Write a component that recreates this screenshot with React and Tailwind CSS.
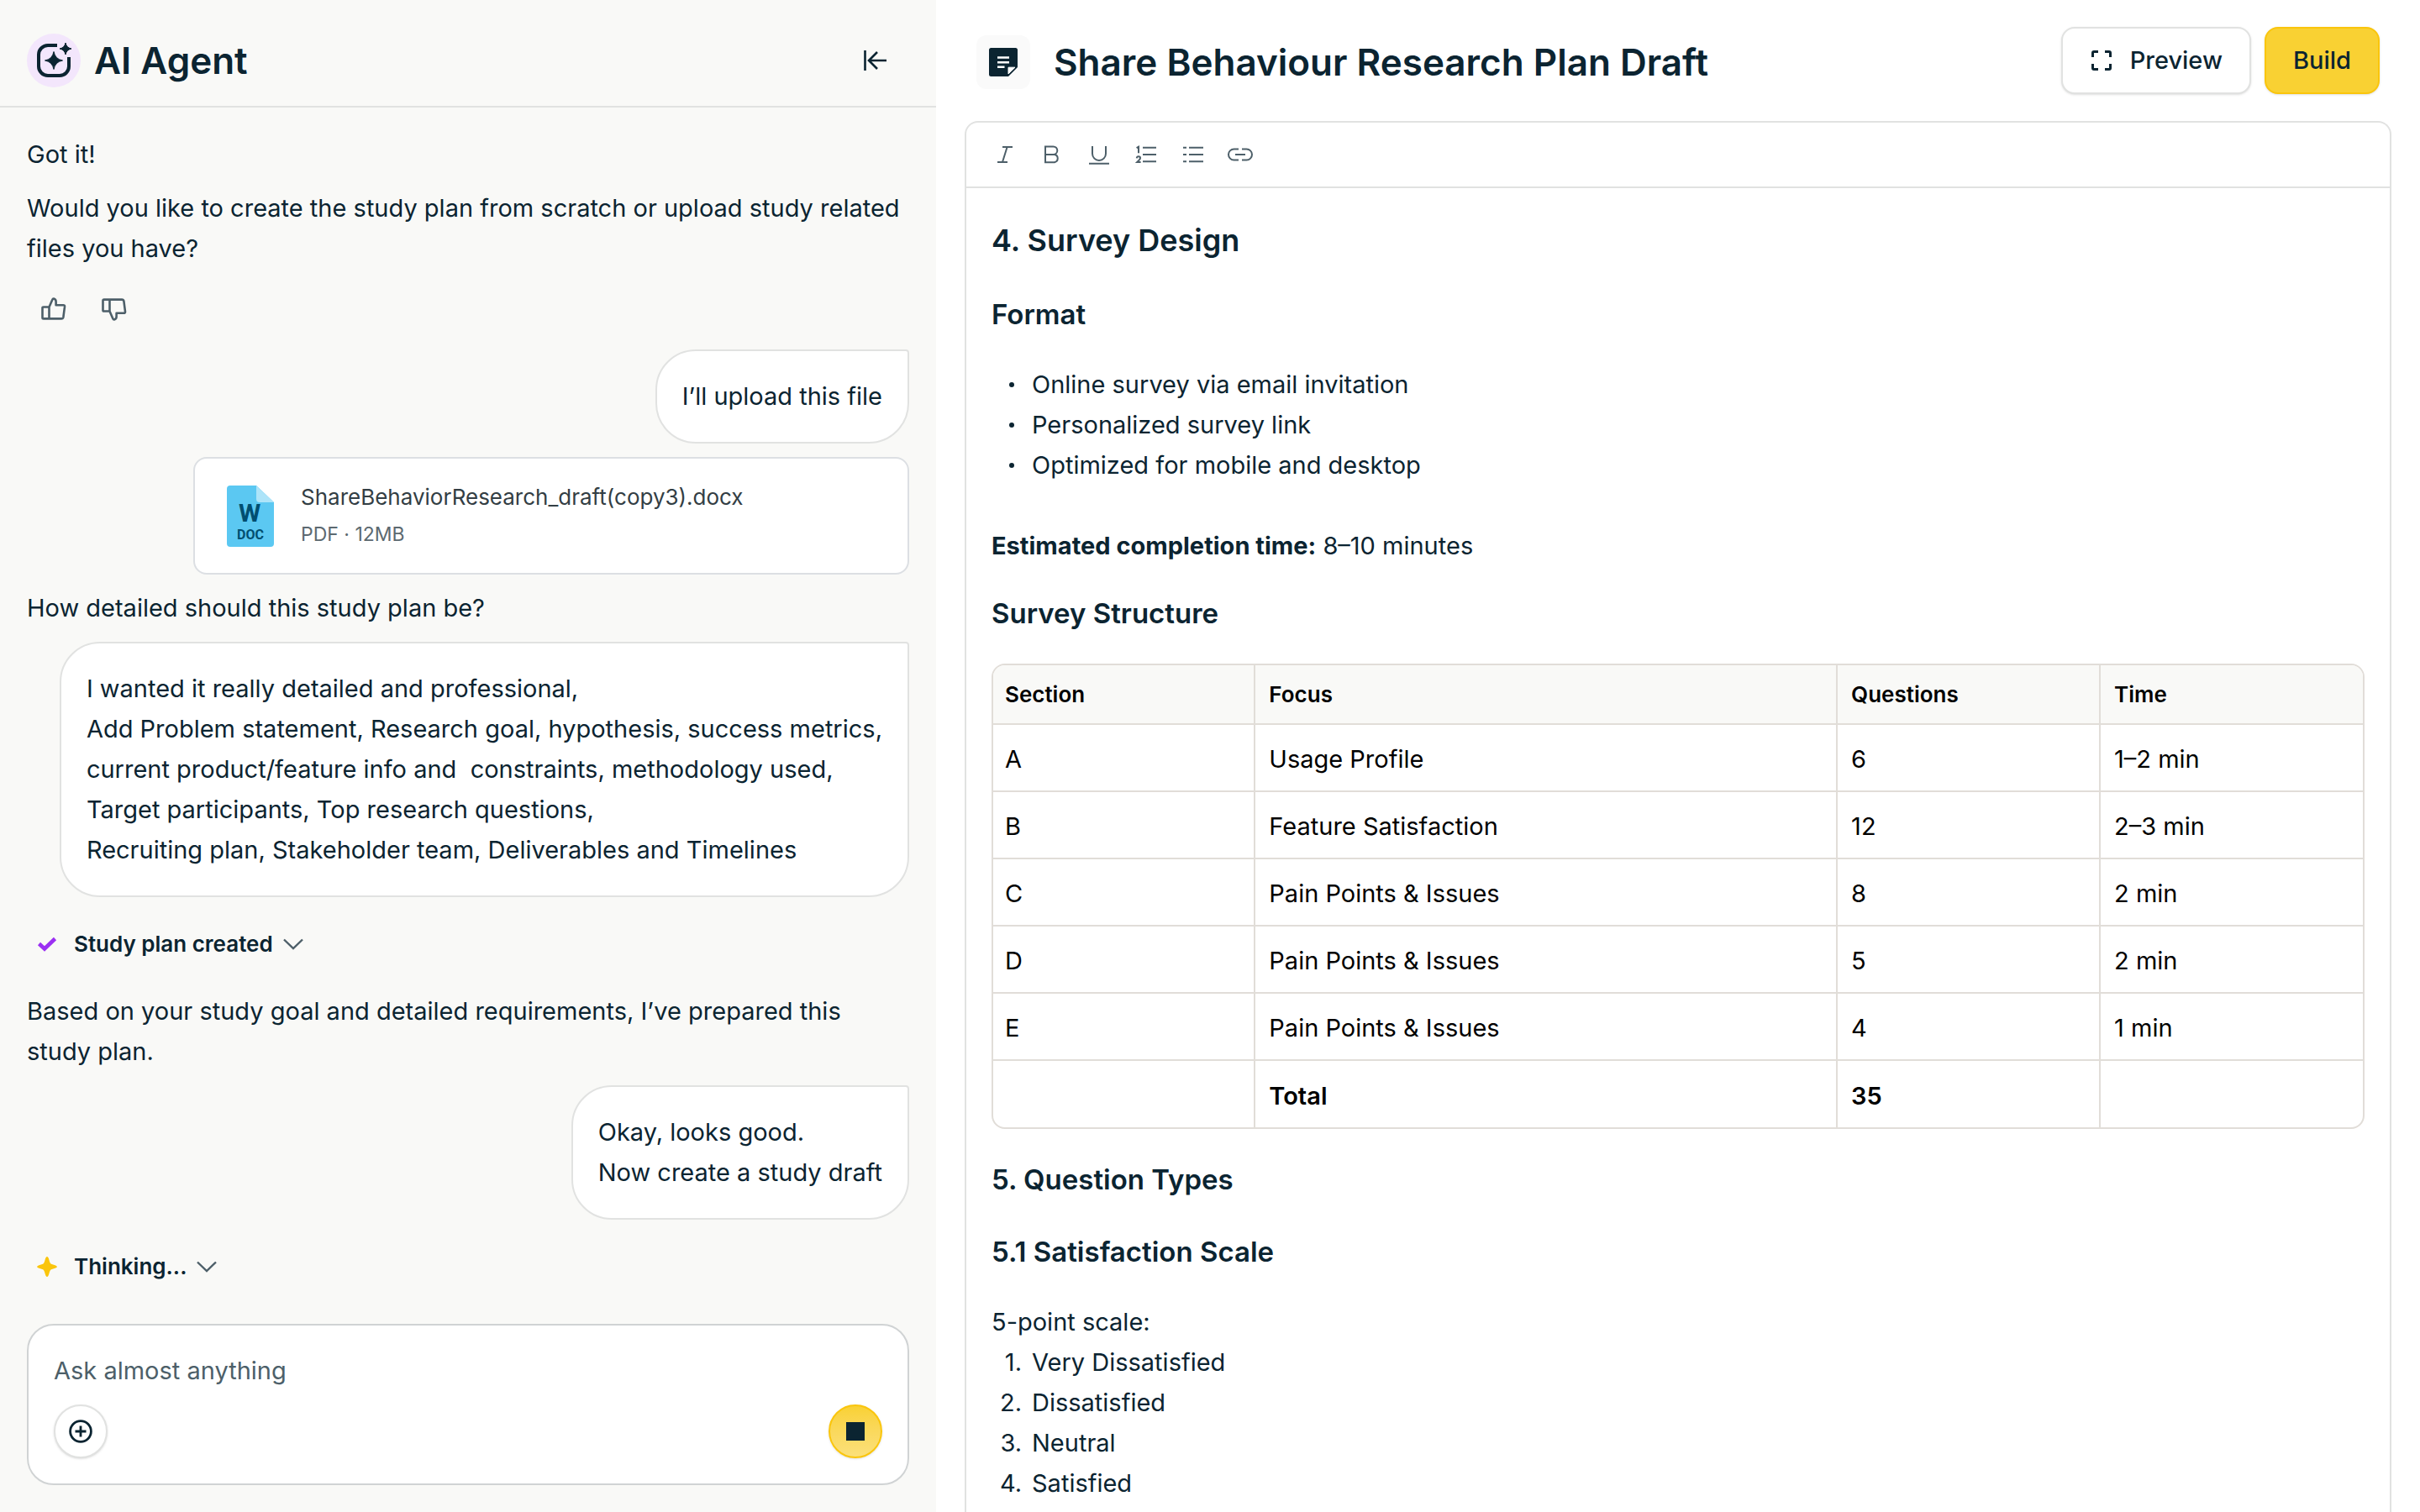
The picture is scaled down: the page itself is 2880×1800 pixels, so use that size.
const LogoIcon = () => (
  <svg viewBox="0 0 64 64" className="size-16" fill="none" aria-hidden="true">
    <path d="M36 14H25A11 11 0 0 0 14 25V39A11 11 0 0 0 25 50H39A11 11 0 0 0 50 39V28" stroke="#0b2431" strokeWidth="4" />
    <path d="M32 21.5Q33.6 30.4 42.5 32Q33.6 33.6 32 42.5Q30.4 33.6 21.5 32Q30.4 30.4 32 21.5Z" fill="#0b2431" stroke="#0b2431" />
    <path d="M46 11Q47.2 16.8 53 18Q47.2 19.2 46 25Q44.8 19.2 39 18Q44.8 16.8 46 11Z" fill="#0b2431" stroke="#0b2431" />
  </svg>
)

const CollapseIcon = () => (
  <svg viewBox="0 0 28 28" className="size-7" fill="none" stroke="#0b2431" strokeWidth="2.6" aria-hidden="true">
    <path d="M1.5 2V26M27 14H6M16 4L6 14L16 24" />
  </svg>
)

const ThumbIcon = ({ className = '' }) => (
  <svg viewBox="0 0 30 28" className={`h-7 w-[30px] ${className}`} fill="none" stroke="#4d5f69" strokeWidth="2.6" strokeLinejoin="round" aria-hidden="true">
    <path d="M9.5 11.5L13.2 3Q13.8 1.4 15 1.5Q17.6 2.2 17.6 5V9.2H26.2Q28.2 9.2 28 11.2L26.4 23.4Q26 25.4 24 25.4H2.8Q1.5 25.4 1.5 24.2V12.6Q1.5 11.5 2.8 11.5H9.5V25.4" />
  </svg>
)

const ChevronIcon = () => (
  <svg viewBox="0 0 24 14" className="h-[14px] w-6" fill="none" stroke="#4d5f69" strokeWidth="2.4" aria-hidden="true">
    <path d="M1 1.5L12 12L23 1.5" />
  </svg>
)

const CheckIcon = () => (
  <svg viewBox="0 0 24 24" className="size-6" fill="none" stroke="#9b30f2" strokeWidth="4.6" aria-hidden="true">
    <path d="M2.5 11.5L9 17.5L21.5 5.5" />
  </svg>
)

const SparkIcon = () => (
  <svg viewBox="0 0 26 26" className="h-[26px] w-6 overflow-visible" fill="#fac50c" aria-hidden="true">
    <path d="M13 0Q14.6 0 15.6 4Q16.8 8.8 18.4 9.4Q26 11.6 26 13Q26 14.4 18.4 16.6Q16.8 17.2 15.6 22Q14.6 26 13 26Q11.4 26 10.4 22Q9.2 17.2 7.6 16.6Q0 14.4 0 13Q0 11.6 7.6 9.4Q9.2 8.8 10.4 4Q11.4 0 13 0Z" />
  </svg>
)

const DocFileIcon = () => (
  <svg viewBox="0 0 56 73" className="h-[73px] w-14" aria-hidden="true">
    <path d="M4 0H35L56 20V69A4 4 0 0 1 52 73H4A4 4 0 0 1 0 69V4A4 4 0 0 1 4 0Z" fill="#5bc8f2" />
    <path d="M35 0L56 20H39A4 4 0 0 1 35 16Z" fill="#ade4f9" />
    <text x="27" y="43" textAnchor="middle" fontFamily="Roboto, sans-serif" fontWeight="700" fontSize="30" fill="#004e70">W</text>
    <text x="28" y="64" textAnchor="middle" fontFamily="Roboto, sans-serif" fontWeight="700" fontSize="16" fill="#004e70">DOC</text>
  </svg>
)

const NoteIcon = () => (
  <svg viewBox="0 0 34 34" className="size-[34px]" aria-hidden="true">
    <path d="M2.5 0H31.5A2.5 2.5 0 0 1 34 2.5V23L23 34H2.5A2.5 2.5 0 0 1 0 31.5V2.5A2.5 2.5 0 0 1 2.5 0Z" fill="#0b2431" />
    <path d="M10 11.5H24M10 17.3H24M10 22.8H18.5" stroke="#fff" strokeWidth="2.6" />
    <path d="M23 31V23.2H31Z" fill="#fff" stroke="#fff" strokeWidth="1" />
  </svg>
)

const ExpandIcon = () => (
  <svg viewBox="0 0 24 24" className="size-6" fill="none" stroke="#0b2431" strokeWidth="3" aria-hidden="true">
    <path d="M1.5 8V3Q1.5 1.5 3 1.5H8M16 1.5H21Q22.5 1.5 22.5 3V8M22.5 16V21Q22.5 22.5 21 22.5H16M8 22.5H3Q1.5 22.5 1.5 21V16" />
  </svg>
)

const PlusCircleIcon = () => (
  <svg viewBox="0 0 28 28" className="size-7" fill="none" stroke="#0b2431" strokeWidth="2.8" aria-hidden="true">
    <circle cx="14" cy="14" r="12.4" />
    <path d="M14 7.5V20.5M7.5 14H20.5" />
  </svg>
)

const tools = [
  { label: 'Italic', icon: <path d="M17 11H29M11 29H23M22.6 11L17 29" /> },
  { label: 'Bold', icon: <path d="M12 10.4H21.5A4.8 4.8 0 0 1 21.5 20H12ZM12 20H23A4.7 4.7 0 0 1 23 29.2H12Z" /> },
  { label: 'Underline', icon: <path d="M12 10V19A8 8 0 0 0 28 19V10M8 30.8H32" /> },
  {
    label: 'Numbered list',
    icon: (
      <>
        <path d="M16 11.8H32M16 20H32M16 28.2H32" />
        <path d="M8.6 12.2L11 10.8V18.2M8.8 24.4Q9 22.2 10.9 22.2Q13 22.2 13 24Q13 25.2 11.6 26.6L9.2 29H13.6" />
      </>
    ),
  },
  { label: 'Bulleted list', icon: <path d="M8 11.8H12M15 11.8H32M8 20H12M15 20H32M8 28.2H12M15 28.2H32" /> },
  { label: 'Link', icon: <path d="M18 13.5H12.5A6.5 6.5 0 0 0 12.5 26.5H18M22 13.5H27.5A6.5 6.5 0 0 1 27.5 26.5H22M14 20H26" /> },
]

const rows = [
  ['A', 'Usage Profile', '6', '1–2 min'],
  ['B', 'Feature Satisfaction', '12', '2–3 min'],
  ['C', 'Pain Points & Issues', '8', '2 min'],
  ['D', 'Pain Points & Issues', '5', '2 min'],
  ['E', 'Pain Points & Issues', '4', '1 min'],
]

const request = [
  'I wanted it really detailed and professional,',
  'Add Problem statement, Research goal, hypothesis, success metrics,',
  'current product/feature info and  constraints, methodology used,',
  'Target participants, Top research questions,',
  'Recruiting plan, Stakeholder team, Deliverables and Timelines',
].join('\n')

const UserBubble = ({ children }) => (
  <div className="self-end rounded-[48px] rounded-tr-sm border-2 border-[#e1e2e1] bg-white p-[30px] whitespace-pre-wrap">
    {children}
  </div>
)

const Status = ({ icon, label }) => (
  <button type="button" className="my-4 flex h-12 items-center self-start pl-3 text-[26px] font-semibold">
    {icon}
    <span className="ml-5 mr-3">{label}</span>
    <ChevronIcon />
  </button>
)

const ChatPanel = () => (
  <aside className="flex flex-col bg-[#f9f9f7]">
    <header className="flex items-center justify-between border-b-2 border-[#e1e2e1] px-8 pt-10 pb-[22px]">
      <div className="flex items-center gap-4">
        <div className="size-16 rounded-full bg-[#f3e6fc]">
          <LogoIcon />
        </div>
        <h1 className="text-[44px] leading-[48px] font-semibold">AI Agent</h1>
      </div>
      <button type="button" aria-label="Collapse panel" className="flex size-20 items-center justify-center -my-4">
        <CollapseIcon />
      </button>
    </header>

    <div className="flex flex-1 flex-col gap-4 px-8 pt-8">
      <p>Got it!</p>
      <p>Would you like to create the study plan from scratch or upload study related files you have?</p>
      <div className="flex gap-2">
        <button type="button" aria-label="Good response" className="flex size-16 items-center justify-center">
          <ThumbIcon />
        </button>
        <button type="button" aria-label="Bad response" className="flex size-16 items-center justify-center">
          <ThumbIcon className="-scale-y-100" />
        </button>
      </div>

      <UserBubble>I’ll upload this file</UserBubble>
      <div className="flex h-[140px] w-[852px] max-w-full items-center gap-8 self-end rounded-2xl border-2 border-[#dcdfe3] bg-white px-[38px]">
        <DocFileIcon />
        <div className="flex flex-col gap-1 leading-10">
          <span className="text-[26px] text-[#333e44]">ShareBehaviorResearch_draft(copy3).docx</span>
          <span className="text-[23px] text-[#5c6970]">PDF · 12MB</span>
        </div>
      </div>

      <p>How detailed should this study plan be?</p>
      <UserBubble>{request}</UserBubble>
      <Status icon={<CheckIcon />} label="Study plan created" />
      <p>Based on your study goal and detailed requirements, I’ve prepared this study plan.</p>
      <UserBubble>{'Okay, looks good.\nNow create a study draft'}</UserBubble>
      <Status icon={<SparkIcon />} label="Thinking..." />
    </div>

    <form className="mx-8 mb-8 flex flex-col gap-4 rounded-[32px] border-2 border-[#d0d3d4] bg-white p-[30px]">
      <input
        type="text"
        aria-label="Message"
        placeholder="Ask almost anything"
        className="h-12 w-full outline-none placeholder:text-[#4d5f69]"
      />
      <div className="flex justify-between">
        <button type="button" aria-label="Add attachment" className="flex size-16 items-center justify-center rounded-full border-2 border-[#e1e2e1] bg-white shadow-sm">
          <PlusCircleIcon />
        </button>
        <button type="button" aria-label="Stop" className="flex size-16 items-center justify-center rounded-full border-2 border-[#fac50c] bg-linear-to-b from-[#f9d133] to-[#fbe07a] shadow-sm">
          <span className="size-[22px] bg-[#0b2431]" />
        </button>
      </div>
    </form>
  </aside>
)

const Heading = ({ className = '', children }) => (
  <h3 className={`text-[33px] leading-[48px] font-semibold ${className}`}>{children}</h3>
)

const SurveyTable = () => (
  <div className="mt-9 overflow-hidden rounded-2xl border-2 border-[#e1ddd8] text-black">
    <table className="w-full table-fixed border-collapse text-left">
      <colgroup>
        <col className="w-[19.1%]" />
        <col />
        <col className="w-[19.2%]" />
        <col className="w-[19.2%]" />
      </colgroup>
      <thead className="bg-[#f9f9f7] text-[26px]">
        <tr className="h-[70px] divide-x-2 divide-[#e1ddd8]">
          <th className="px-[14px] font-semibold">Section</th>
          <th className="px-4 font-semibold">Focus</th>
          <th className="px-4 font-semibold">Questions</th>
          <th className="px-4 font-semibold">Time</th>
        </tr>
      </thead>
      <tbody>
        {rows.map(([section, focus, questions, time]) => (
          <tr key={section} className="h-20 divide-x-2 divide-[#e1ddd8] border-t-2 border-[#e1ddd8]">
            <td className="px-[14px] pt-1">{section}</td>
            <td className="px-4 pt-1">{focus}</td>
            <td className="px-4 pt-1">{questions}</td>
            <td className="px-4 pt-1">{time}</td>
          </tr>
        ))}
        <tr className="h-20 divide-x-2 divide-[#e1ddd8] border-t-2 border-[#e1ddd8] font-semibold">
          <td />
          <td className="px-4 pt-1">Total</td>
          <td className="px-4 pt-1">35</td>
          <td />
        </tr>
      </tbody>
    </table>
  </div>
)

const DocumentPanel = () => (
  <main className="flex min-h-0 flex-col px-[34px]">
    <header className="flex items-center justify-between px-[14px] py-8">
      <div className="flex items-center gap-7 pt-1">
        <div className="flex size-16 items-center justify-center rounded-xl bg-[#fafafa]">
          <NoteIcon />
        </div>
        <h1 className="text-[44px] leading-[48px] font-semibold">Share Behaviour Research Plan Draft</h1>
      </div>
      <div className="flex gap-4 font-medium">
        <button type="button" className="flex h-20 items-center gap-[22px] rounded-2xl border-2 border-[#e1e2e1] bg-white pr-8 pl-[34px] shadow-sm">
          <ExpandIcon />
          Preview
        </button>
        <button type="button" className="h-20 rounded-2xl border-2 border-[#fac50c] bg-[#f9d133] px-8 shadow-sm">
          Build
        </button>
      </div>
    </header>

    <section className="min-h-0 flex-1 overflow-hidden rounded-t-2xl border-2 border-b-0 border-[#e1e2e1]">
      <div className="flex h-[78px] items-center gap-4 border-b-2 border-[#e1e2e1] px-[26px]">
        {tools.map(({ label, icon }) => (
          <button key={label} type="button" aria-label={label} className="size-10">
            <svg viewBox="0 0 40 40" className="size-10" fill="none" stroke="#4d5f69" strokeWidth="2" aria-hidden="true">
              {icon}
            </svg>
          </button>
        ))}
      </div>

      <article className="px-[30px] pt-[38px]">
        <h2 className="text-[36px] leading-[48px] font-semibold">4. Survey Design</h2>
        <Heading className="mt-10">Format</Heading>
        <ul className="mt-9">
          {['Online survey via email invitation', 'Personalized survey link', 'Optimized for mobile and desktop'].map((item) => (
            <li key={item} className="flex items-center">
              <span className="flex w-12 justify-center">
                <span className="size-[6px] rounded-full bg-[#0b2431]" />
              </span>
              {item}
            </li>
          ))}
        </ul>
        <p className="mt-12">
          <strong className="font-bold">Estimated completion time:</strong> 8–10 minutes
        </p>
        <Heading className="mt-8">Survey Structure</Heading>
        <SurveyTable />
        <Heading className="mt-9">5. Question Types</Heading>
        <Heading className="mt-[38px]">5.1 Satisfaction Scale</Heading>
        <p className="mt-9">5-point scale:</p>
        <ol>
          {['Very Dissatisfied', 'Dissatisfied', 'Neutral', 'Satisfied'].map((item, i) => (
            <li key={item} className="flex gap-3">
              <span className="w-9 text-right">{i + 1}.</span>
              {item}
            </li>
          ))}
        </ol>
      </article>
    </section>
  </main>
)

const App = () => (
  <div className="grid h-screen grid-cols-[557fr_883fr] overflow-hidden bg-white font-[Inter,sans-serif] text-[29px] leading-[48px] text-[#0b2431]">
    <ChatPanel />
    <DocumentPanel />
  </div>
)

export default App
